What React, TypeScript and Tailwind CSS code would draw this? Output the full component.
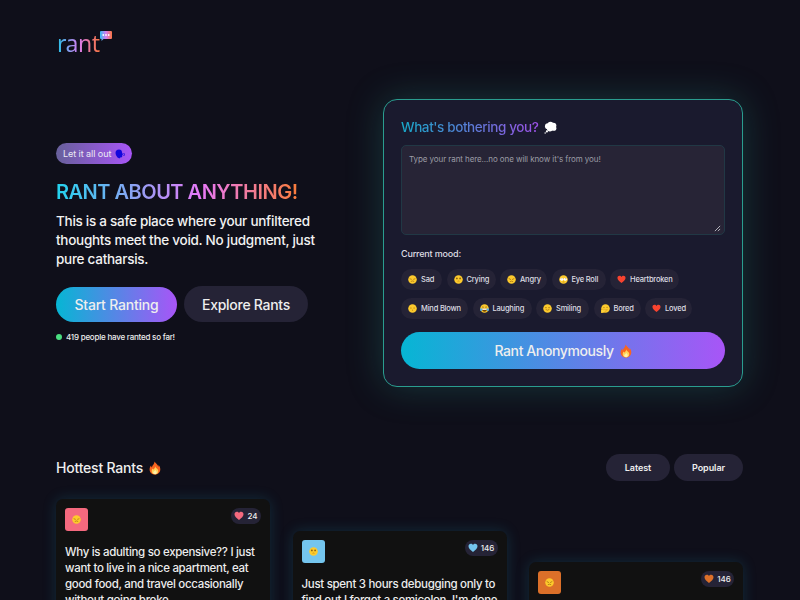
import type { ReactNode } from "react";

type Mood = "sad" | "crying" | "angry" | "eyeroll" | "blown" | "laughing" | "smiling" | "bored" | "heart";

const moods: { label: string; mood: Mood; width: string }[][] = [
  [
    { label: "Sad", mood: "sad", width: "w-[41px]" },
    { label: "Crying", mood: "crying", width: "w-[49px]" },
    { label: "Angry", mood: "angry", width: "w-[47px]" },
    { label: "Eye Roll", mood: "eyeroll", width: "w-[54px]" },
    { label: "Heartbroken", mood: "heart", width: "w-[69px]" },
  ],
  [
    { label: "Mind Blown", mood: "blown", width: "w-[67px]" },
    { label: "Laughing", mood: "laughing", width: "w-[59px]" },
    { label: "Smiling", mood: "smiling", width: "w-[53px]" },
    { label: "Bored", mood: "bored", width: "w-[47px]" },
    { label: "Loved", mood: "heart", width: "w-[47px]" },
  ],
];

const rants: {
  lines: string[];
  likes: number;
  likesWidth: string;
  mood: Mood;
  tile: string;
  heart: string;
  offset: string;
}[] = [
  {
    lines: [
      "Why is adulting so expensive?? I just",
      "want to live in a nice apartment, eat",
      "good food, and travel occasionally",
      "without going broke.",
    ],
    likes: 24,
    likesWidth: "w-[30px]",
    mood: "sad",
    tile: "bg-[#f4697e]",
    heart: "#f4697e",
    offset: "mt-0",
  },
  {
    lines: ["Just spent 3 hours debugging only to", "find out I forgot a semicolon. I'm done"],
    likes: 146,
    likesWidth: "w-[33px]",
    mood: "crying",
    tile: "bg-[#74c5ee]",
    heart: "#74c5ee",
    offset: "mt-[32px]",
  },
  {
    lines: [],
    likes: 146,
    likesWidth: "w-[33px]",
    mood: "angry",
    tile: "bg-[#dc7029]",
    heart: "#dc7029",
    offset: "mt-[63px]",
  },
];

const HEART = "M10 18 C5 14 1 10.500 1 6.500 C1 3.500 3 1.500 5.700 1.500 C7.500 1.500 9.200 2.500 10 4.200 C10.800 2.500 12.500 1.500 14.300 1.500 C17 1.500 19 3.500 19 6.500 C19 10.500 15 14 10 18 Z";

function Heart({ fill, className }: { fill: string; className: string }) {
  return (
    <svg viewBox="0 0 20 20" className={className} aria-hidden="true">
      <path d={HEART} fill={fill} />
    </svg>
  );
}

const features: Record<Exclude<Mood, "heart">, ReactNode> = {
  sad: (
    <g stroke="#8a560b" strokeWidth="1.200" fill="none" strokeLinecap="round">
      <path d="M4.500 8.500 L7.500 9.500 M15.500 8.500 L12.500 9.500 M7 14 Q10 12 13 14" />
    </g>
  ),
  crying: (
    <g>
      <ellipse cx="6.500" cy="7.500" rx="1.400" ry="2" fill="#5b3507" />
      <ellipse cx="13.500" cy="7.500" rx="1.400" ry="2" fill="#5b3507" />
      <path d="M8 14 Q10 12.800 12 14" stroke="#8a560b" strokeWidth="1" fill="none" />
    </g>
  ),
  angry: (
    <g stroke="#8a560b" strokeWidth="1.300" fill="none" strokeLinecap="round">
      <path d="M4.500 8 L8 10 M15.500 8 L12 10 M7 14.500 Q10 12.500 13 14.500" />
    </g>
  ),
  eyeroll: (
    <g>
      <circle cx="6.200" cy="9.500" r="3.500" fill="#fff" />
      <circle cx="13.800" cy="9.500" r="3.500" fill="#fff" />
      <circle cx="6.500" cy="8.500" r="1" fill="#704308" />
      <circle cx="14" cy="8.500" r="1" fill="#704308" />
      <path d="M8 15.500 H12" stroke="#8a560b" strokeWidth="1" />
    </g>
  ),
  blown: (
    <g fill="#8a560b">
      <ellipse cx="6.500" cy="8.800" rx="1.500" ry="1" />
      <ellipse cx="13.500" cy="8.800" rx="1.500" ry="1" />
      <ellipse cx="10" cy="13.500" rx="1.500" ry=".8" />
    </g>
  ),
  laughing: (
    <g>
      <path d="M4.500 7.500 Q6.500 5 8.500 7.500 M11.500 7.500 Q13.500 5 15.500 7.500" stroke="#704308" strokeWidth="1.300" fill="none" />
      <path d="M4.500 10.500 H15.500 Q15 17 10 17 Q5 17 4.500 10.500Z" fill="#704308" />
      <path d="M5 10.300 H15 V13 H5Z" fill="#fff" />
      <ellipse cx="2.500" cy="12.500" rx="2.300" ry="2.800" fill="#54b4ef" />
      <ellipse cx="17.500" cy="12.500" rx="2.300" ry="2.800" fill="#54b4ef" />
    </g>
  ),
  smiling: (
    <g stroke="#8a560b" strokeWidth="1.200" fill="none" strokeLinecap="round">
      <path d="M5 8 Q6.500 6.500 8 8 M12 8 Q13.500 6.500 15 8 M6.500 12.500 Q10 16 13.500 12.500" />
    </g>
  ),
  bored: (
    <g>
      <path d="M5 8 H8 M12 7.500 H15" stroke="#8a560b" strokeWidth="1.200" />
      <path d="M0 12.500 Q3 11 6 13 L14 12 Q15.500 14 10 15 Q9 20 3 20 L0 20Z" fill="#ffd43a" stroke="#b97a12" strokeWidth=".7" />
    </g>
  ),
};

function Emoji({ mood, className }: { mood: Mood; className: string }) {
  if (mood === "heart") return <Heart fill="#f8432f" className={className} />;
  return (
    <svg viewBox="0 0 20 20" className={className} aria-hidden="true">
      <circle cx="10" cy="10" r="9.500" fill="#fdca2c" />
      {features[mood]}
    </svg>
  );
}

function Fire({ className }: { className: string }) {
  return (
    <svg viewBox="0 0 20 22" className={className} aria-hidden="true">
      <path
        d="M9 0 C11 3 15 5 15.500 9 C16 8 16.200 6.500 15.800 5.500 C18 8 19 10.500 18.800 14 C18.500 19 14.500 22 10 22 C5 22 1.200 19 1 14 C.9 11 2 8.500 3.500 7 C3.500 8.500 4 9.500 5 10 C5 6 9.500 5 9 0Z"
        fill="#f9651f"
      />
      <path
        d="M10.500 8 C10.500 11 15.500 12 15.500 16 C15.500 19.500 13 21.500 10 21.500 C7 21.500 4.500 19.500 4.500 16.500 C4.500 14 5.500 13 6 12 C6.500 13 7 13.500 7.500 13.500 C8.500 12 10.300 11 10.500 8Z"
        fill="#ffd35a"
      />
      <path d="M10.500 14 C11 15.500 13 16.500 13 18.500 C13 20.500 11.500 21.500 10 21.500 C8.500 21.500 7 20.500 7 18.700 C7 16.700 10 16 10.500 14Z" fill="#fff0a8" />
    </svg>
  );
}

function Logo() {
  return (
    <div className="ml-px flex h-[24px] items-start">
      <span className="bg-linear-to-r/srgb from-[#22c3e6] via-[#d77cf3] to-[#f9733c] bg-clip-text pr-px font-['Noto_Sans'] text-[23px] leading-[24px] tracking-[-0.5px] text-transparent">
        rant
      </span>
      <svg viewBox="0 0 12 10" className="h-[10px] w-[12px]" aria-hidden="true">
        <defs>
          <linearGradient id="bubble">
            <stop offset="0" stopColor="#32bff0" />
            <stop offset=".5" stopColor="#d77cf3" />
            <stop offset="1" stopColor="#fb7540" />
          </linearGradient>
        </defs>
        <path d="M1 0H11Q12 0 12 1V7Q12 8 11 8H3.500L1.500 10V8H1Q0 8 0 7V1Q0 0 1 0Z" fill="url(#bubble)" />
        <g fill="#fff">
          <circle cx="3.300" cy="4" r=".9" />
          <circle cx="6" cy="4" r=".9" />
          <circle cx="8.700" cy="4" r=".9" />
        </g>
      </svg>
    </div>
  );
}

function Hero() {
  return (
    <section className="w-[280px] pt-[44px]">
      <div className="flex h-[21px] w-[76px] items-center gap-[4px] rounded-full bg-linear-to-r/srgb from-[#67609a] to-[#a855f7] pl-[7px]">
        <span className="text-[9px] tracking-[-0.05px] whitespace-nowrap text-[#ece9f5]">Let it all out</span>
        <svg viewBox="0 0 20 20" className="size-[10px] shrink-0" aria-hidden="true">
          <path d="M1 8 Q1 1 8 1 Q14 1 14 7 L16 11 L14.500 12 V15 Q14.500 17 10.500 17 L9 19 L5 17 Q1 13 1 8Z" fill="#1206dd" />
          <path d="M17.500 8 Q20 11 17.500 14" stroke="#1206dd" strokeWidth="1.800" fill="none" />
        </svg>
      </div>
      <h1 className="mt-[15px] w-[241px] bg-linear-to-r/srgb from-[#22d3ee] via-[#e879f9] via-60% to-[#f97c3c] bg-clip-text text-[20px] leading-[26px] font-semibold tracking-[-0.5px] whitespace-nowrap text-transparent">
        RANT ABOUT ANYTHING!
      </h1>
      <p className="mt-[7px] text-[13.500px] leading-[19px] font-[450] tracking-[-0.270px] whitespace-nowrap text-[#f2f2f2]">
        This is a safe place where your unfiltered
        <br />
        thoughts meet the void. No judgment, just
        <br />
        pure catharsis.
      </p>
      <div className="mt-[17px] flex items-center gap-[7px]">
        <button className="h-[35px] w-[121px] rounded-full bg-linear-to-r/srgb from-[#06b6d4] to-[#a855f7] text-[14px] font-medium tracking-[-0.200px] text-[#eeeeee]">
          Start Ranting
        </button>
        <button className="h-[36px] w-[124px] rounded-full bg-[#252336] text-[14px] font-medium tracking-[-0.270px] text-[#eeeeee]">
          Explore Rants
        </button>
      </div>
      <div className="mt-[9px] flex items-center gap-[4px]">
        <span className="size-[6px] rounded-full bg-[#4ade80]" />
        <span className="text-[8px] leading-[12px] font-[450] tracking-[-0.220px] text-[#ececec]">419 people have ranted so far!</span>
      </div>
    </section>
  );
}

function RantForm() {
  return (
    <section className="h-[288px] w-[360px] rounded-[14px] border border-[#2a9d8f] bg-[#1a1a2e] px-[17px] pt-[17px] shadow-[0_0_36px_rgba(42,157,143,0.28)]">
      <div className="flex h-[20px] items-center gap-[5px]">
        <h2 className="bg-linear-to-r/srgb from-[#17a9c8] to-[#9d50e6] bg-clip-text text-[13.500px] leading-[20px] font-medium tracking-[-0.400px] text-transparent">
          What's bothering you?
        </h2>
        <svg viewBox="0 0 20 20" className="size-[13px]" aria-hidden="true">
          <g fill="#fff">
            <circle cx="6" cy="8" r="4.500" />
            <circle cx="10" cy="5.500" r="4.500" />
            <circle cx="14.500" cy="7" r="4.500" />
            <circle cx="15" cy="11" r="4" />
            <circle cx="9" cy="11.500" r="4.500" />
            <circle cx="4.500" cy="16" r="1.700" />
            <circle cx="1.800" cy="18.500" r="1.100" />
          </g>
        </svg>
      </div>
      <div className="mt-[8px] flex h-[90px] rounded-[5px] border border-[#213845] bg-[#272436] px-[7px] pt-[7px] pb-[2px]">
        <span className="flex-1 text-[8px] leading-[12px] tracking-[-0.080px] text-[#9c9ca5]">
          Type your rant here...no one will know it's from you!
        </span>
        <svg viewBox="0 0 8 8" className="-mr-[4px] size-[7px] self-end" aria-hidden="true">
          <path d="M1 7 L7 1 M4.500 7 L7 4.500" stroke="#c4c4ca" strokeWidth="1" />
        </svg>
      </div>
      <p className="mt-[12px] text-[9px] leading-[13px] font-medium tracking-[-0.170px] text-[#dedee3]">Current mood:</p>
      <div className="mt-[9px] flex flex-col gap-[8px]">
        {moods.map((row, i) => (
          <div key={i} className="flex gap-[4.500px]">
            {row.map((m) => (
              <button
                key={m.label}
                className={`flex h-[21px] shrink-0 items-center gap-[4px] rounded-full bg-[#252336] pl-[7px] text-[7.500px] font-medium tracking-[-0.200px] whitespace-nowrap text-[#dedee3] ${m.width}`}
              >
                <Emoji mood={m.mood} className="size-[9px] shrink-0" />
                {m.label}
              </button>
            ))}
          </div>
        ))}
      </div>
      <button className="mt-[13px] flex h-[37px] w-full items-center justify-center gap-[6px] rounded-full bg-linear-to-r/srgb from-[#06b6d4] to-[#a855f7] text-[14px] font-medium tracking-[-0.400px] text-[#eeeeee]">
        Rant Anonymously
        <Fire className="h-[14px] w-[12px]" />
      </button>
    </section>
  );
}

export default function App() {
  return (
    <main className="h-screen overflow-hidden bg-[#0f0f1a] pt-[31px] pr-[57px] pl-[56px] font-['Inter','Liberation_Sans',sans-serif]">
      <Logo />
      <div className="mt-[44px] flex justify-between">
        <Hero />
        <RantForm />
      </div>

      <div className="mt-[67px] flex h-[27px] items-center justify-between">
        <div className="flex items-center gap-[6px]">
          <h2 className="text-[14px] font-medium tracking-[-0.200px] text-[#eeeeee]">Hottest Rants</h2>
          <Fire className="h-[14px] w-[12px]" />
        </div>
        <div className="flex gap-[4px] text-[9px] font-semibold tracking-[-0.050px] text-[#eeeeee]">
          <button className="h-[27px] w-[64px] rounded-full bg-[#252336]">Latest</button>
          <button className="h-[27px] w-[69px] rounded-full bg-[#252336]">Popular</button>
        </div>
      </div>

      <div className="mt-[18px] flex items-start justify-between">
        {rants.map((r) => (
          <article
            key={r.mood}
            className={`h-[150px] w-[214px] rounded-[7px] bg-[#111111] px-[9px] pt-[9px] shadow-[0_0_14px_rgba(34,150,180,0.22)] ${r.offset}`}
          >
            <div className="flex items-start justify-between">
              <div className={`flex size-[23px] items-center justify-center rounded-[3px] ${r.tile}`}>
                <Emoji mood={r.mood} className="size-[9px]" />
              </div>
              <div className={`flex h-[16px] items-center justify-center gap-[3px] rounded-full bg-[#252336] text-[8px] font-medium text-[#eeeeee] ${r.likesWidth}`}>
                <Heart fill={r.heart} className="size-[10px]" />
                {r.likes}
              </div>
            </div>
            <p className="mt-[13px] text-[11.500px] leading-[16px] font-[450] tracking-[-0.310px] whitespace-nowrap text-[#ececec]">
              {r.lines.map((line) => (
                <span key={line} className="block">
                  {line}
                </span>
              ))}
            </p>
          </article>
        ))}
      </div>
    </main>
  );
}
